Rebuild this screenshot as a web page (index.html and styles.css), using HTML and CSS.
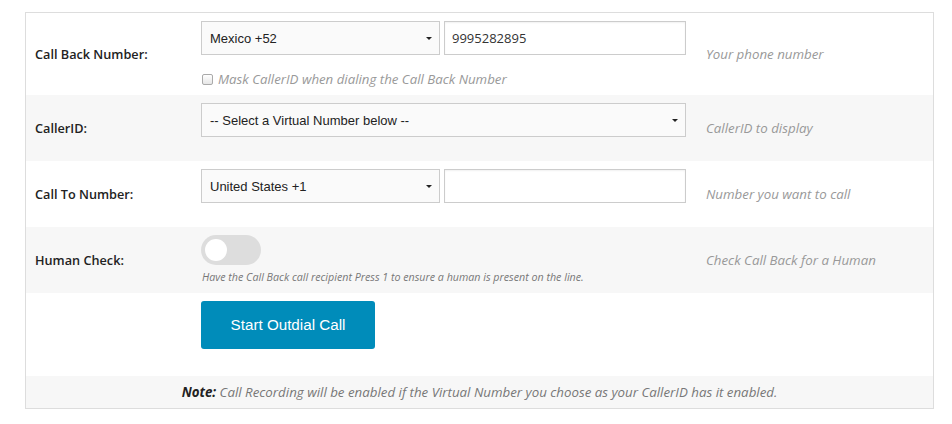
FILE: index.html
```html
<!DOCTYPE html>
<html>
<head>
<meta charset="utf-8">
<link rel="stylesheet" href="styles.css">
</head>
<body>
<div class="panel">
  <div class="row row-tall">
    <div class="label">Call Back Number:</div>
    <div class="controls">
      <div class="phone">
        <div class="select-wrap narrow">
          <select><option>Mexico +52</option></select>
          <span class="arrow"></span>
        </div>
        <input class="text-input" type="text" value="9995282895">
      </div>
      <label class="check"><span class="box"></span>Mask CallerID when dialing the Call Back Number</label>
    </div>
    <div class="help">Your phone number</div>
  </div>
  <div class="row alt">
    <div class="label">CallerID:</div>
    <div class="controls">
      <div class="select-wrap full">
        <select><option>-- Select a Virtual Number below --</option></select>
        <span class="arrow"></span>
      </div>
    </div>
    <div class="help">CallerID to display</div>
  </div>
  <div class="row">
    <div class="label">Call To Number:</div>
    <div class="controls">
      <div class="phone">
        <div class="select-wrap narrow">
          <select><option>United States +1</option></select>
          <span class="arrow"></span>
        </div>
        <input class="text-input" type="text" value="">
      </div>
    </div>
    <div class="help">Number you want to call</div>
  </div>
  <div class="row alt row-toggle">
    <div class="label">Human Check:</div>
    <div class="controls">
      <div class="toggle"><span class="knob"></span></div>
      <div class="hint">Have the Call Back call recipient Press 1 to ensure a human is present on the line.</div>
    </div>
    <div class="help">Check Call Back for a Human</div>
  </div>
  <div class="row row-button">
    <div class="label"></div>
    <div class="controls">
      <button class="btn">Start Outdial Call</button>
    </div>
    <div class="help"></div>
  </div>
  <div class="note"><b>Note:</b> Call Recording will be enabled if the Virtual Number you choose as your CallerID has it enabled.</div>
</div>
</body>
</html>
```

FILE: styles.css
```css
* { box-sizing: border-box; }
html, body { margin: 0; padding: 0; background: #fff; }
body {
  padding: 12px 0 0 25px;
  font-family: "Open Sans", "Liberation Sans", sans-serif;
  font-size: 13px;
  color: #222;
}
.panel {
  width: 909px;
  border: 1px solid #ddd;
}
.row {
  display: grid;
  grid-template-columns: 146px 485px 1fr;
  column-gap: 20px;
  align-items: center;
  padding: 8px 10px 8px 9px;
}
.row.alt { background: #f7f7f7; }
.label {
  font-weight: 600;
  color: #222;
  font-size: 12.7px;
}
.help {
  font-style: italic;
  color: #999;
  font-size: 13.3px;
}
.controls { display: flex; flex-direction: column; }
.phone { display: flex; gap: 4px; margin-bottom: 16px; height: 34px; }
.select-wrap { position: relative; height: 34px; }
.select-wrap.narrow { width: 239px; }
.select-wrap.full { width: 485px; margin-bottom: 16px; }
.select-wrap select {
  appearance: none;
  -webkit-appearance: none;
  width: 100%;
  height: 34px;
  border: 1px solid #ccc;
  border-radius: 0;
  background: #fafafa;
  font-family: "Liberation Sans", Arial, sans-serif;
  font-size: 13px;
  color: #222;
  padding: 0 8px;
  outline: none;
}
.arrow {
  position: absolute;
  right: 8px;
  top: 16px;
  width: 0; height: 0;
  border-left: 3px solid transparent;
  border-right: 3px solid transparent;
  border-top: 3px solid #222;
}
.text-input {
  width: 242px;
  height: 34px;
  border: 1px solid #ccc;
  background: #fff;
  font-family: "Open Sans", sans-serif;
  font-size: 13px;
  color: #333;
  padding: 0 7px;
  outline: none;
  box-shadow: inset 0 1px 2px rgba(0,0,0,0.06);
}
.check {
  display: flex;
  align-items: center;
  height: 16px;
  font-style: italic;
  color: #999;
  font-size: 13.25px;
}
.box {
  width: 11px; height: 11px;
  border: 1px solid #aaa;
  border-radius: 2px;
  background: linear-gradient(#fff, #e6e6e6);
  margin: 0 5px 0 1px;
}
.toggle {
  position: relative;
  width: 60px; height: 30px;
  border-radius: 15px;
  background: #ddd;
}
.knob {
  position: absolute;
  left: 4px; top: 4px;
  width: 22px; height: 22px;
  border-radius: 50%;
  background: #fff;
}
.hint {
  margin-top: 4px;
  line-height: 16px;
  font-size: 10.7px;
  font-style: italic;
  color: #777;
  padding-left: 1px;
}
.row-toggle .controls { height: 50px; }
.row-button { align-items: start; padding-bottom: 27px; }
.btn {
  width: 174px; height: 48px;
  border: none;
  border-radius: 3px;
  background: #008cba;
  color: #fff;
  font-family: "Liberation Sans", Arial, sans-serif;
  font-size: 15.2px;
  text-align: center;
  padding: 0 0 1px;
}
.note {
  background: #f7f7f7;
  height: 32px;
  line-height: 32px;
  text-align: center;
  font-style: italic;
  color: #777;
  font-size: 13.3px;
}
.note b { color: #222; font-weight: 700; }
```
